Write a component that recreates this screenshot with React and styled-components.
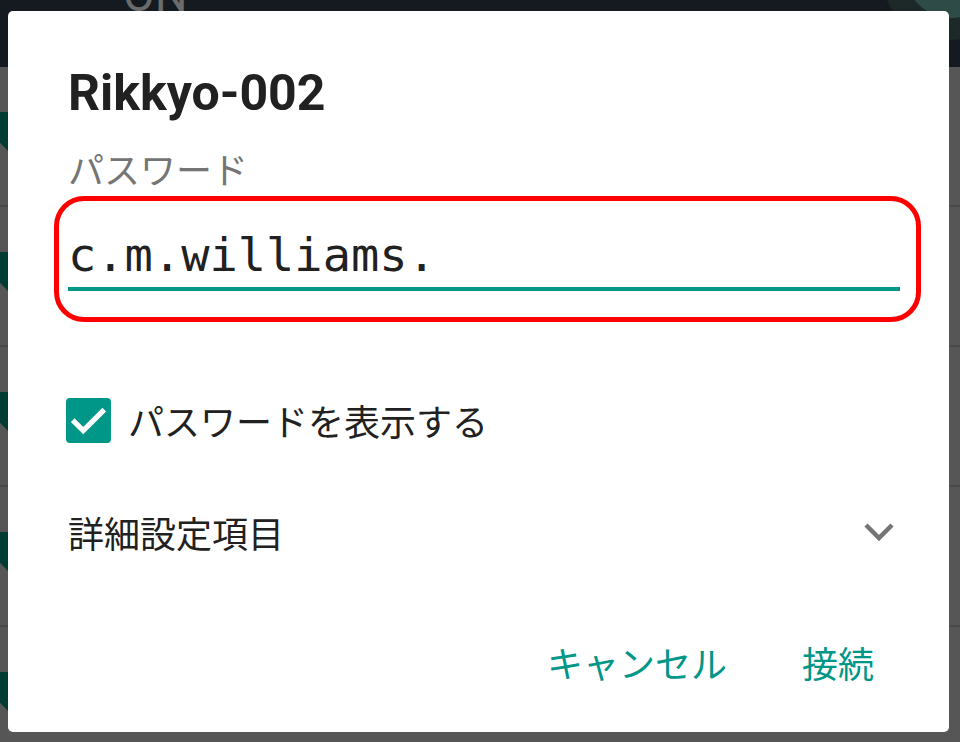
import React from "react";
import styled, { createGlobalStyle } from "styled-components";

const GlobalStyle = createGlobalStyle`
  html, body {
    margin: 0;
    padding: 0;
    width: 960px;
    height: 742px;
    overflow: hidden;
  }
  body {
    font-family: Roboto, "Noto Sans CJK JP", sans-serif;
  }
`;

const Screen = styled.div`
  position: relative;
  width: 960px;
  height: 742px;
  overflow: hidden;
  background: #565656;
`;

const TopBar = styled.div`
  position: relative;
  height: 67px;
  background: #141a1f;
  display: flex;
  align-items: flex-start;
  padding-left: 123px;
  overflow: hidden;
`;

const BarLabel = styled.span`
  margin-top: -32px;
  font-family: Roboto, sans-serif;
  font-size: 46px;
  line-height: 54px;
  color: #6b6b6b;
`;

const Halo = styled.div`
  position: absolute;
  left: ${(p) => p.$cx - p.$r}px;
  top: ${(p) => p.$cy - p.$r}px;
  width: ${(p) => p.$r * 2}px;
  height: ${(p) => p.$r * 2}px;
  border-radius: 50%;
  background: ${(p) => p.$color};
`;

const Row = styled.div`
  height: 138px;
  border-bottom: 2px solid #4a4a4a;
  display: flex;
  align-items: flex-start;
`;

const RowMark = styled.div`
  margin-top: 45px;
  width: 10px;
  height: 41px;
  background: #003c33;
  clip-path: polygon(0 0, 100% 0, 100% 100%, 0 75%);
`;

const Dialog = styled.div`
  position: absolute;
  left: 8px;
  top: 11px;
  width: 941px;
  height: 721px;
  box-sizing: border-box;
  background: #ffffff;
  border-radius: 5px;
  padding: 53px 49px 0 60px;
  display: flex;
  flex-direction: column;
`;

const Title = styled.h2`
  margin: 0;
  font-family: Roboto, sans-serif;
  font-weight: 700;
  font-size: 50px;
  line-height: 58px;
  color: #212121;
`;

const FieldLabel = styled.div`
  margin-top: 24px;
  font-family: "Noto Sans CJK JP", sans-serif;
  font-size: 36px;
  line-height: 44px;
  color: #757575;
`;

const FieldWrap = styled.div`
  position: relative;
  margin-top: 36px;
`;

const PasswordInput = styled.input`
  display: block;
  width: 100%;
  box-sizing: content-box;
  height: 56px;
  margin: 0;
  padding: 0 0 5px 0;
  border: none;
  border-bottom: 4px solid #009688;
  outline: none;
  background: transparent;
  font-family: "DejaVu Sans Mono", monospace;
  font-size: 47px;
  color: #212121;
`;

const Highlight = styled.div`
  position: absolute;
  top: -30px;
  bottom: -31px;
  left: -14px;
  right: -21px;
  border: 5px solid #ff0000;
  border-radius: 30px;
  pointer-events: none;
`;

const CheckRow = styled.label`
  margin-top: 99px;
  height: 60px;
  display: flex;
  align-items: center;
  gap: 17px;
  margin-left: -2px;
`;

const CheckBox = styled.span`
  width: 45px;
  height: 45px;
  border-radius: 4px;
  background: #009688;
  display: flex;
  align-items: center;
  justify-content: center;
`;

const RowText = styled.span`
  font-family: "Noto Sans CJK JP", sans-serif;
  font-size: 36px;
  line-height: 44px;
  color: #212121;
`;

const AdvancedRow = styled.div`
  margin-top: 52px;
  height: 60px;
  display: flex;
  align-items: center;
  justify-content: space-between;
`;

const Chevron = styled.svg`
  margin-right: 5px;
`;

const Actions = styled.div`
  margin-top: 70px;
  display: flex;
  justify-content: flex-end;
  gap: 21px;
`;

const TextButton = styled.button`
  border: none;
  background: transparent;
  margin: 0;
  padding: 0 ${(p) => (p.$last ? 26 : 27)}px 0 27px;
  height: 60px;
  font-family: "Noto Sans CJK JP", sans-serif;
  font-size: 36px;
  line-height: 60px;
  color: #009688;
  cursor: pointer;
`;

export default function App() {
  return (
    <>
      <GlobalStyle />
      <Screen>
        <TopBar>
          <BarLabel>ON</BarLabel>
          <Halo $cx={950} $cy={-30} $r={70} $color="#1d2829" />
          <Halo $cx={952} $cy={-30} $r={48} $color="#2e4b47" />
        </TopBar>
        {[0, 1, 2, 3, 4].map((i) => (
          <Row key={i}>
            <RowMark />
          </Row>
        ))}
        <Dialog>
          <Title>Rikkyo-002</Title>
          <FieldLabel>パスワード</FieldLabel>
          <FieldWrap>
            <PasswordInput type="text" readOnly value="c.m.williams." />
            <Highlight />
          </FieldWrap>
          <CheckRow>
            <CheckBox>
              <svg width="45" height="45" viewBox="0 0 24 24">
                <path
                  d="M4.6 12.8l4.6 4.6L19.4 7.2"
                  fill="none"
                  stroke="#ffffff"
                  strokeWidth="2.8"
                  strokeLinecap="square"
                />
              </svg>
            </CheckBox>
            <RowText>パスワードを表示する</RowText>
          </CheckRow>
          <AdvancedRow>
            <RowText>詳細設定項目</RowText>
            <Chevron width="32" height="24" viewBox="0 0 32 24">
              <polyline
                points="3,5 16,18 29,5"
                fill="none"
                stroke="#757575"
                strokeWidth="4.5"
              />
            </Chevron>
          </AdvancedRow>
          <Actions>
            <TextButton>キャンセル</TextButton>
            <TextButton $last>接続</TextButton>
          </Actions>
        </Dialog>
      </Screen>
    </>
  );
}
